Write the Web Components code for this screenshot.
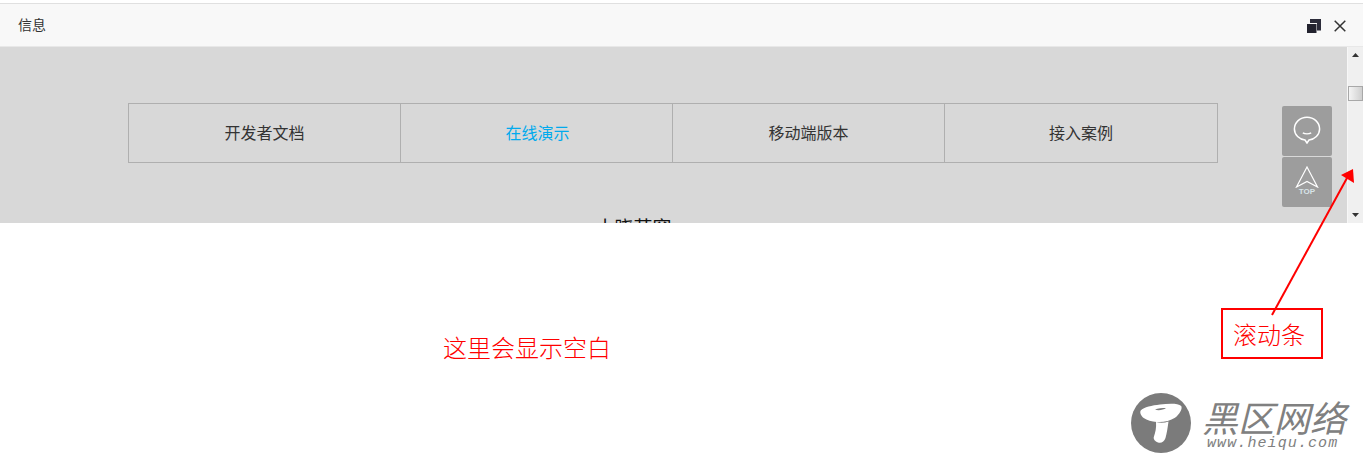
<!DOCTYPE html>
<html lang="zh">
<head>
<meta charset="utf-8">
<title>信息</title>
<style>
  html, body { margin: 0; padding: 0; background: #fff; }
  body { width: 1363px; height: 458px; overflow: hidden; position: relative; font-family: "Noto Sans CJK SC", "Liberation Sans", sans-serif; }
</style>
</head>
<body>
<layer-dialog heading="信息">
  <nav-table>
    <nav-cell>开发者文档</nav-cell>
    <nav-cell active>在线演示</nav-cell>
    <nav-cell>移动端版本</nav-cell>
    <nav-cell>接入案例</nav-cell>
  </nav-table>
  <div style="text-align:center;font-size:19px;line-height:24px;color:#111;margin:52px 0 0 -80px">小晓苹窗</div>
</layer-dialog>
<note-overlay></note-overlay>
<heiqu-mark></heiqu-mark>

<script>
class LayerDialog extends HTMLElement {
    constructor() {
        super();
        this.attachShadow({ mode: 'open' });
    }

    connectedCallback() {
        const heading = this.getAttribute('heading') || '';
        this.shadowRoot.innerHTML = `
            <style>
                :host { display: block; padding-top: 3px; }
                .bar {
                    height: 42px;
                    display: flex;
                    align-items: center;
                    justify-content: space-between;
                    padding: 0 17px 0 18px;
                    background: #f8f8f8;
                    border-top: 1px solid #e0e0e0;
                    border-bottom: 1px solid #e8e8e8;
                    font-size: 14px;
                    color: #333;
                }
                .bar span { margin-bottom: 2px; }
                .tools { display: flex; align-items: center; gap: 13px; margin-top: 2px; }
                .tools svg { display: block; }
                .body { display: flex; height: 176px; overflow: hidden; }
                .content { flex: 1; position: relative; background: #d8d8d8; padding-top: 56px; min-width: 0; }
                .side {
                    position: absolute; top: 59px; left: 1282px;
                    display: flex; flex-direction: column; gap: 1px;
                }
            </style>
            <div class="bar">
                <span>${heading}</span>
                <div class="tools">
                    <svg width="14" height="14" viewBox="0 0 14 14"><path d="M3 0h11v11.5h-4V4H3z" fill="#2c2c3a"/><rect x="0" y="5" width="9.5" height="9" fill="#22222e"/></svg>
                    <svg width="12" height="12" viewBox="0 0 12 12"><path d="M.7.7l10.6 10.6M11.3.7L.7 11.3" stroke="#333" stroke-width="1.5" fill="none"/></svg>
                </div>
            </div>
            <div class="body">
                <div class="content">
                    <slot></slot>
                    <div class="side">
                        <side-button kind="chat"></side-button>
                        <side-button kind="top"></side-button>
                    </div>
                </div>
                <fake-scrollbar></fake-scrollbar>
            </div>
        `;
    }
}

class NavTable extends HTMLElement {
    constructor() {
        super();
        this.attachShadow({ mode: 'open' });
        this.shadowRoot.innerHTML = `
            <style>
                :host {
                    display: grid;
                    grid-template-columns: repeat(4, 272px);
                    width: 1088px;
                    height: 58px;
                    margin-left: 128px;
                    border: 1px solid #afafaf;
                    box-sizing: content-box;
                }
            </style>
            <slot></slot>
        `;
    }
}

class NavCell extends HTMLElement {
    constructor() {
        super();
        this.attachShadow({ mode: 'open' });
        this.shadowRoot.innerHTML = `
            <style>
                :host {
                    display: flex;
                    align-items: center;
                    justify-content: center;
                    border-right: 1px solid #afafaf;
                    font-size: 16px;
                    color: #333;
                    padding-bottom: 2px;
                }
                :host(:last-child) { border-right: 0; }
                :host([active]) { color: #01aaed; padding-left: 2px; }
            </style>
            <slot></slot>
        `;
    }
}

class SideButton extends HTMLElement {
    constructor() {
        super();
        this.attachShadow({ mode: 'open' });
    }

    connectedCallback() {
        const chat = `<svg width="28" height="28" viewBox="0 0 28 28" fill="none" stroke="#fff" stroke-width="1.5">
            <path d="M14 27l-2-3C6.400 23.300 1.400 19 1.400 13 1.400 6.400 7.100 1.200 14 1.200S26.600 6.400 26.600 13c0 6-5 10.300-10.600 11z"/>
            <path d="M9.800 16.800c2.200 1.200 6.200 1.200 8.400 0"/></svg>`;
        const top = `<svg width="24" height="22" viewBox="0 0 24 22" fill="none" stroke="#fff" stroke-width="1.2">
            <path d="M12 1L1.500 21 12 15.500 22.500 21z"/></svg>`;
        const isTop = this.getAttribute('kind') === 'top';
        this.shadowRoot.innerHTML = `
            <style>
                :host {
                    display: flex; position: relative;
                    justify-content: center;
                    width: 50px; height: 50px;
                    box-sizing: border-box;
                    padding-top: 10px;
                    background: #9d9d9d;
                    border-radius: 2px;
                }
                :host([kind="top"]) { padding-top: 9px; }
                svg { display: block; }
                span {
                    position: absolute; left: 0; right: 0; bottom: 11px;
                    text-align: center;
                    font: bold 8px/8px "Liberation Sans", sans-serif;
                    color: #d8e4e8;
                }
            </style>
            ${isTop ? top + '<span>TOP</span>' : chat}
        `;
    }
}

class FakeScrollbar extends HTMLElement {
    constructor() {
        super();
        this.attachShadow({ mode: 'open' });
        this.shadowRoot.innerHTML = `
            <style>
                :host {
                    display: flex;
                    flex-direction: column;
                    align-items: center;
                    width: 16px;
                    background: #f0f0f0;
                    border-left: 1px solid #f7f7f7;
                    box-sizing: border-box;
                }
                .arrow { width: 15px; height: 16px; display: flex; align-items: center; justify-content: center; }
                .thumb {
                    width: 15px; height: 15px; margin-top: 23px;
                    box-sizing: border-box;
                    border: 1px solid #a8a8a8;
                    background: linear-gradient(90deg, #f4f4f4, #cfcfcf);
                }
                .spacer { flex: 1; }
            </style>
            <div class="arrow"><svg width="7" height="4"><path d="M3.500 0L7 4H0z" fill="#333"/></svg></div>
            <div class="thumb"></div>
            <div class="spacer"></div>
            <div class="arrow"><svg width="7" height="4"><path d="M0 0h7L3.500 4z" fill="#333"/></svg></div>
        `;
    }
}

// red notes drawn on top of the screenshot
class NoteOverlay extends HTMLElement {
    constructor() {
        super();
        this.attachShadow({ mode: 'open' });
        this.shadowRoot.innerHTML = `
            <style>
                :host { display: block; position: absolute; inset: 0; pointer-events: none; color: #f00; font-size: 24px; font-weight: 300; }
                svg { position: absolute; left: 0; top: 0; }
                .blank { position: absolute; left: 443px; top: 331px; line-height: 32px; }
                .label {
                    position: absolute; left: 1221px; top: 308px;
                    width: 102px; height: 51px; box-sizing: border-box;
                    border: 2px solid #f00;
                    padding-right: 6px;
                    display: flex; align-items: center; justify-content: center;
                }
            </style>
            <svg width="1363" height="458">
                <path d="M1272 315L1347 178" stroke="#f00" stroke-width="2" fill="none"/>
                <path d="M1353 169L1354 183 1341 175z" fill="#f00"/>
            </svg>
            <div class="blank">这里会显示空白</div>
            <div class="label">滚动条</div>
        `;
    }
}

class HeiquMark extends HTMLElement {
    constructor() {
        super();
        this.attachShadow({ mode: 'open' });
        this.shadowRoot.innerHTML = `
            <style>
                :host {
                    display: flex; position: absolute; left: 1131px; top: 393px;
                    align-items: center; gap: 11px; color: #808080;
                }
                .text { display: flex; flex-direction: column; }
                .cn { font-size: 36px; line-height: 40px; font-style: italic; white-space: nowrap; }
                .en { font: italic 15px/15px "Liberation Mono", monospace; letter-spacing: 1.1px; white-space: nowrap; margin-left: 5px; }
                svg { display: block; }
            </style>
            <svg width="60" height="60" viewBox="0 0 60 60">
                <circle cx="30" cy="30" r="30" fill="#7b7b7b"/>
                <path d="M9.700 17.500C13 14 21 12.600 29 11.600c8-1 18-1.600 21.200 1.400 1.600 2.400-1.600 8.400-6.200 11.800-5 3.200-12 4.800-18.300 4.200-5-.5-9.700-1.700-13-4-2.600-2-4.200-5.300-3-7.500z" fill="#fff"/>
                <path d="M25 29c4 1 8.500 1 12.500-.5-.8 5.500-1.500 11.500-3 16.500-1.200 4-4.500 5.500-7.500 4.500-3-1-4.800-3.500-4.200-5.500 1.600-4.500 2.700-9 2.200-15z" fill="#fff"/>
                <path d="M24 16.500c3-1.200 7-1.500 11-1.500-2.500 2-8 3-11 1.500z" fill="#7b7b7b"/>
            </svg>
            <div class="text">
                <div class="cn">黑区网络</div>
                <div class="en">www.heiqu.com</div>
            </div>
        `;
    }
}

customElements.define('layer-dialog', LayerDialog);
customElements.define('nav-table', NavTable);
customElements.define('nav-cell', NavCell);
customElements.define('side-button', SideButton);
customElements.define('fake-scrollbar', FakeScrollbar);
customElements.define('note-overlay', NoteOverlay);
customElements.define('heiqu-mark', HeiquMark);
</script>
</body>
</html>
